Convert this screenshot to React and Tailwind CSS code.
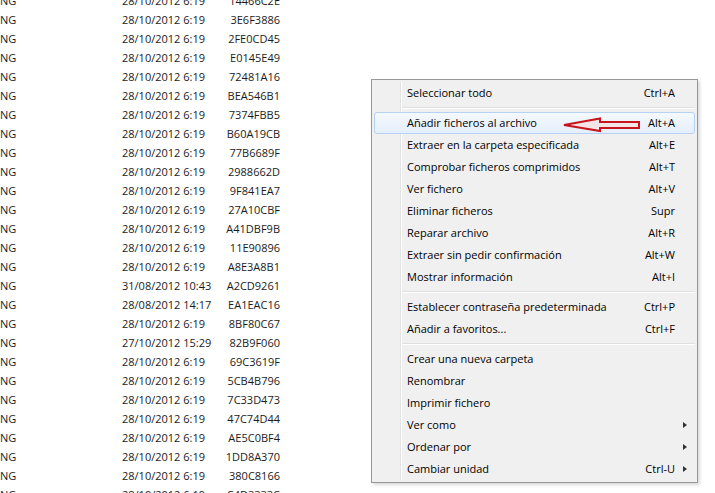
import React from "react";

const rows = [
  ["28/10/2012 6:19", "14466C2E"],
  ["28/10/2012 6:19", "3E6F3886"],
  ["28/10/2012 6:19", "2FE0CD45"],
  ["28/10/2012 6:19", "E0145E49"],
  ["28/10/2012 6:19", "72481A16"],
  ["28/10/2012 6:19", "BEA546B1"],
  ["28/10/2012 6:19", "7374FBB5"],
  ["28/10/2012 6:19", "B60A19CB"],
  ["28/10/2012 6:19", "77B6689F"],
  ["28/10/2012 6:19", "2988662D"],
  ["28/10/2012 6:19", "9F841EA7"],
  ["28/10/2012 6:19", "27A10CBF"],
  ["28/10/2012 6:19", "A41DBF9B"],
  ["28/10/2012 6:19", "11E90896"],
  ["28/10/2012 6:19", "A8E3A8B1"],
  ["31/08/2012 10:43", "A2CD9261"],
  ["28/08/2012 14:17", "EA1EAC16"],
  ["28/10/2012 6:19", "8BF80C67"],
  ["27/10/2012 15:29", "82B9F060"],
  ["28/10/2012 6:19", "69C3619F"],
  ["28/10/2012 6:19", "5CB4B796"],
  ["28/10/2012 6:19", "7C33D473"],
  ["28/10/2012 6:19", "47C74D44"],
  ["28/10/2012 6:19", "AE5C0BF4"],
  ["28/10/2012 6:19", "1DD8A370"],
  ["28/10/2012 6:19", "380C8166"],
  ["28/10/2012 6:19", "C4D3333C"],
];

const groups = [
  [["Seleccionar todo", "Ctrl+A"]],
  [
    ["Añadir ficheros al archivo", "Alt+A", "hl"],
    ["Extraer en la carpeta especificada", "Alt+E"],
    ["Comprobar ficheros comprimidos", "Alt+T"],
    ["Ver fichero", "Alt+V"],
    ["Eliminar ficheros", "Supr"],
    ["Reparar archivo", "Alt+R"],
    ["Extraer sin pedir confirmación", "Alt+W"],
    ["Mostrar información", "Alt+I"],
  ],
  [
    ["Establecer contraseña predeterminada", "Ctrl+P"],
    ["Añadir a favoritos...", "Ctrl+F"],
  ],
  [
    ["Crear una nueva carpeta", ""],
    ["Renombrar", ""],
    ["Imprimir fichero", ""],
    ["Ver como", "", "sub"],
    ["Ordenar por", "", "sub"],
    ["Cambiar unidad", "Ctrl-U", "sub"],
  ],
];

const font = { fontFamily: '"Segoe UI", "Open Sans", "Noto Sans", sans-serif' };

function MenuRow({ label, shortcut, flag }) {
  const hl = flag === "hl";
  return (
    <div
      className={
        "relative flex h-[22px] items-center pl-[32px] pr-[19px] text-[11px] text-black " +
        (hl
          ? "rounded-[3px] border border-[#b5d2f3] bg-gradient-to-b from-[#f5f9fe] to-[#e5eefb]"
          : "border border-transparent")
      }
    >
      <span className="flex-1 whitespace-nowrap">{label}</span>
      <span className="whitespace-nowrap">{shortcut}</span>
      {flag === "sub" && (
        <span className="absolute right-[7px] top-[7px] h-0 w-0 border-y-[3.5px] border-l-[4px] border-y-transparent border-l-[#333]" />
      )}
      {hl && (
        <svg
          className="absolute left-[187px] top-[4px]"
          width="80"
          height="16"
          viewBox="0 0 80 16"
        >
          <polygon
            points="2,8 38,1.5 38,5 77,5 77,11 38,11 38,14"
            fill="#f3e4e6"
            stroke="#c8141e"
            strokeWidth="2"
            strokeLinejoin="miter"
          />
        </svg>
      )}
    </div>
  );
}

function Separator() {
  return (
    <div className="flex h-[8px] flex-col justify-center pl-[27px]">
      <div className="h-px bg-[#e0e0e0]" />
      <div className="h-px bg-white" />
    </div>
  );
}

export default function App() {
  return (
    <div className="relative h-[493px] w-[715px] overflow-hidden bg-white" style={font}>
      <div className="mt-[-8px] flex flex-col text-[11px] text-[#1b1b1b]">
        {rows.map(([d, h], i) => (
          <div key={i} className="flex h-[19px] items-center whitespace-nowrap">
            <span className="w-[122px]">NG</span>
            <span className="w-[100px]">{d}</span>
            <span className="w-[58px] text-right">{h}</span>
          </div>
        ))}
      </div>

      <div className="absolute left-[371px] top-[79px] w-[327px] border border-[#979797] bg-[#f0f0f0] px-[2px] py-[2px] shadow-[2px_2px_3px_rgba(0,0,0,0.15)]">
        <div className="pointer-events-none absolute bottom-[2px] left-[28px] top-[2px] flex">
          <div className="w-px bg-[#e2e3e3]" />
          <div className="w-px bg-white" />
        </div>
        {groups.map((g, gi) => (
          <React.Fragment key={gi}>
            {gi > 0 && <Separator />}
            {g.map(([l, s, f], i) => (
              <MenuRow key={i} label={l} shortcut={s} flag={f} />
            ))}
          </React.Fragment>
        ))}
      </div>
    </div>
  );
}
